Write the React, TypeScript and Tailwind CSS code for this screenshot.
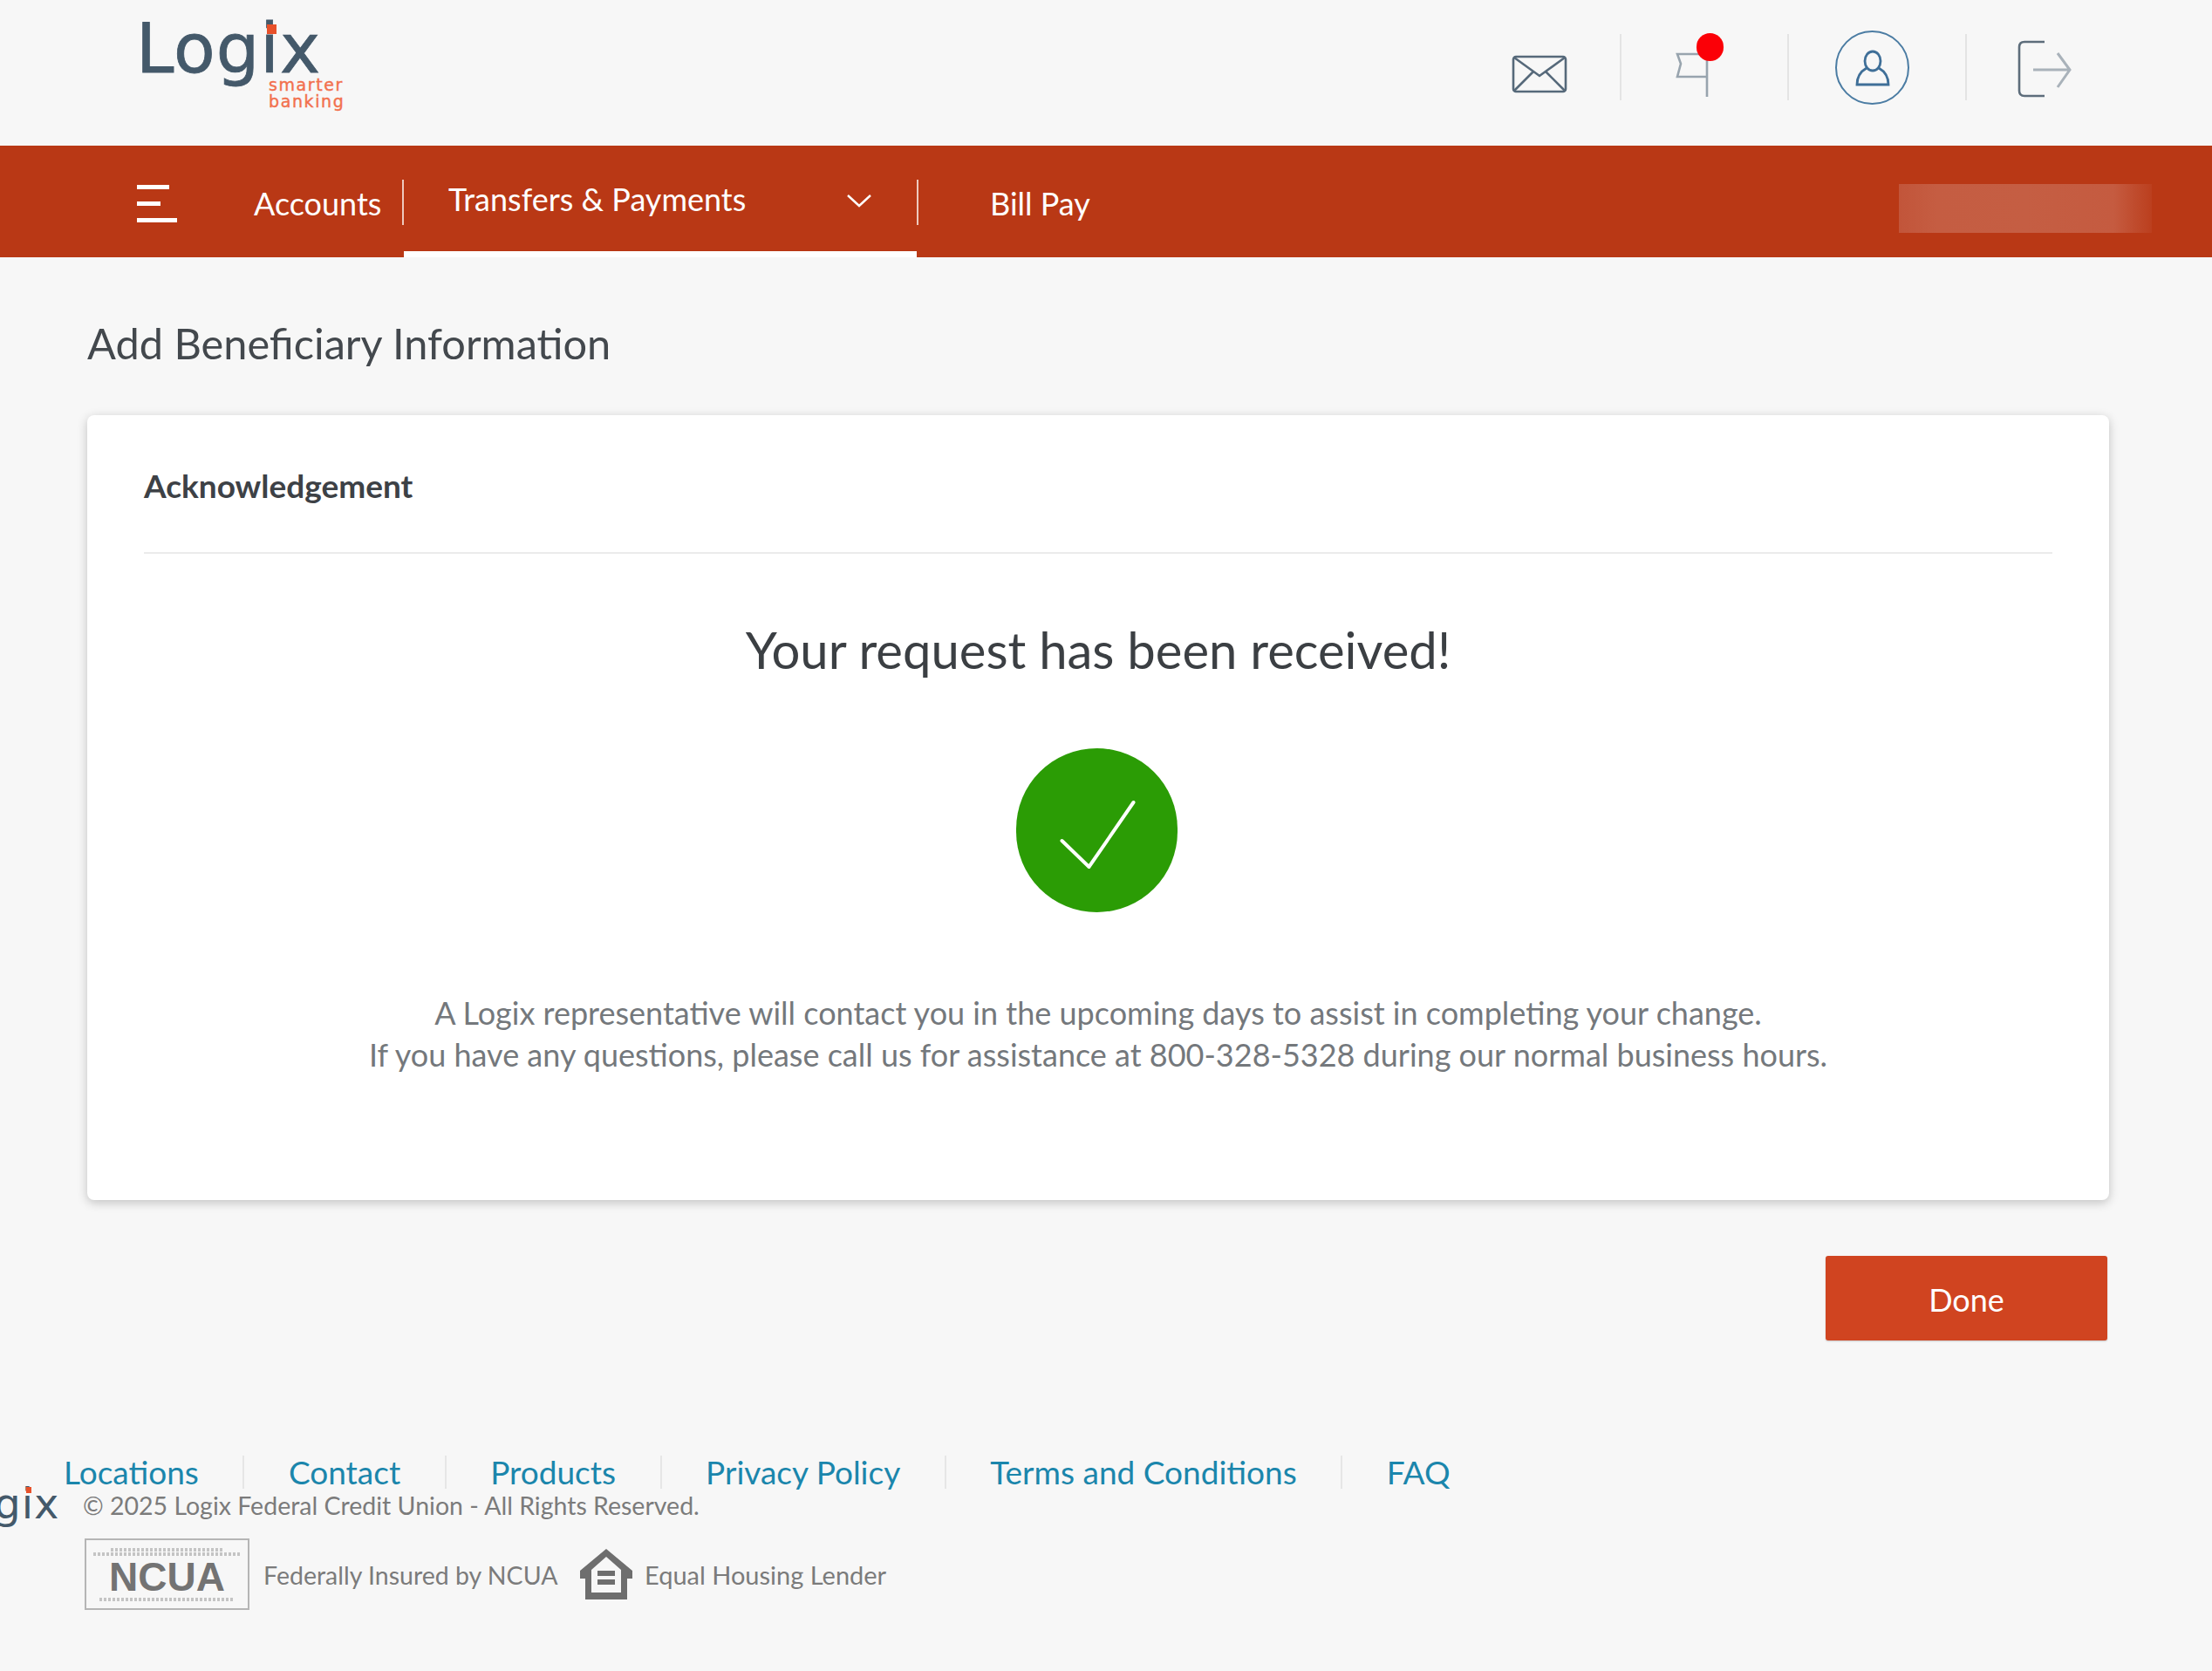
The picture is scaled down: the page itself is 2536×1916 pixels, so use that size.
import React from "react";

const Logo = () => (
  <div className="relative w-[240px] h-[110px] font-['DejaVu_Sans',sans-serif]">
    <span className="absolute left-[-4px] top-[27px] text-[78px] leading-[58px] font-normal text-[#44596a] tracking-[1px] [-webkit-text-stroke:0.8px_#44596a]">Logix</span>
    <span className="absolute left-[146px] top-[28px] w-[11px] h-[11px] bg-[#e8512a]" />
    <span className="absolute left-[148px] top-[88px] text-[19px] leading-[19px] font-normal text-[#f2704e] tracking-[1.6px] [-webkit-text-stroke:0.4px_#f2704e]">smarter<br />banking</span>
  </div>
);

const Sep = () => <div className="w-[2px] h-[76px] bg-[#e4e4e4]" />;
const FootSep = () => <div className="w-[2px] h-[38px] bg-[#e6e6e6] mx-[50.5px]" />;

export default function App() {
  return (
    <div className="w-[2536px] h-[1916px] overflow-hidden bg-[#f7f7f7] font-['Lato',sans-serif]">
      <header className="h-[167px] flex items-start">
        <div className="pl-[160px]"><Logo /></div>
        <div className="ml-auto relative w-[850px] h-[167px] flex items-center">
          <svg className="ml-[47px] mt-[2px]" width="64" height="44" viewBox="0 0 64 44" fill="none" stroke="#56697a" strokeWidth="2.6">
            <rect x="2" y="2" width="60" height="40" rx="3" />
            <path d="M3 3 L32 24 L61 3 M3 41 L25 19 M61 41 L39 19" />
          </svg>
          <div className="ml-[60px] -mt-[14px]"><Sep /></div>
          <svg className="ml-[62px] mt-[2px]" width="40" height="54" viewBox="0 0 40 54" fill="none" stroke="#98a4ae" strokeWidth="2.6">
            <path d="M36 2 V53 M36 4 H2 L6 15 L2 30 H36" />
          </svg>
          <div className="ml-[88px] -mt-[14px]"><Sep /></div>
          <div className="ml-[53px] -mt-[12px] w-[85px] h-[85px] rounded-full border-2 border-[#4b7ca3] flex items-center justify-center">
            <svg width="40" height="42" viewBox="0 0 40 42" fill="none" stroke="#3f6f98" strokeWidth="2.8">
              <ellipse cx="20" cy="13" rx="9" ry="11" />
              <path d="M13 21 C6 25 2 31 2 40 H38 C38 31 34 25 27 21" />
            </svg>
          </div>
          <div className="ml-[64px] -mt-[14px]"><Sep /></div>
          <svg className="ml-[58px] -mt-[10px]" width="62" height="66" viewBox="0 0 62 66" fill="none">
            <path d="M31 2 H8 Q2 2 2 8 V58 Q2 64 8 64 H31" stroke="#5d6d7b" strokeWidth="2.6" />
            <path d="M18 34 H60 M46 15 L60 34 L46 54" stroke="#a9b2ba" strokeWidth="3" />
          </svg>
          <span className="absolute left-[259px] top-[38px] w-[31px] h-[32px] rounded-full bg-[#fb0007]" />
        </div>
      </header>

      <nav className="h-[128px] bg-[#b93815] flex items-stretch text-white text-[36px]">
        <div className="ml-[157px] mt-[45px] flex flex-col gap-[14px]">
          <div className="w-[37px] h-[5px] bg-white" />
          <div className="w-[27px] h-[5px] bg-white" />
          <div className="w-[46px] h-[5px] bg-white" />
        </div>
        <span className="ml-[88px] mt-[44px] leading-[44px] w-[170px]">Accounts</span>
        <div className="w-[2px] h-[52px] mt-[39px] bg-[#eec9bd]" />
        <div className="w-[588px] border-b-[7px] border-white flex items-start pl-[51px]">
          <span className="mt-[39px] leading-[44px]">Transfers &amp; Payments</span>
          <svg className="ml-auto mr-[51px] mt-[55px]" width="30" height="16" viewBox="0 0 30 16" fill="none" stroke="#fff" strokeWidth="2.4"><path d="M2 2 L15 14 L28 2" /></svg>
        </div>
        <div className="w-[2px] h-[52px] mt-[39px] bg-[#eec9bd]" />
        <span className="ml-[82px] mt-[44px] leading-[44px]">Bill Pay</span>
        <div className="ml-auto mr-[69px] mt-[44px] w-[290px] h-[56px] bg-[linear-gradient(90deg,#c2553a,#c55d42_15%,#c55e43_50%,#c55b40_85%,#bb3f1e)]" />
      </nav>

      <main className="pl-[100px] pr-[118px]">
        <h1 className="mt-[71px] text-[48.7px] leading-[54px] text-[#43484d] font-normal">Add Beneficiary Information</h1>
        <section className="mt-[56px] h-[900px] bg-white rounded-[8px] shadow-[0_3px_12px_rgba(0,0,0,0.22)] px-[65px]">
          <h2 className="pt-[58px] text-[37px] leading-[46px] font-bold text-[#3d4146] h-[159px] border-b-2 border-[#ebebeb]">Acknowledgement</h2>
          <div className="flex flex-col items-center">
            <p className="mt-[76px] text-[58px] leading-[68px] text-[#3b3f43]">Your request has been received!</p>
            <div className="mt-[79px] -ml-[3px] w-[185px] h-[188px] rounded-full bg-[#2b9c05] flex items-center justify-center">
              <svg width="92" height="88" viewBox="0 0 92 88" fill="none" stroke="#fff" strokeWidth="4" strokeLinecap="round"><path d="M5.5 56 L36.5 86 L87.5 12" /></svg>
            </div>
            <p className="mt-[91px] text-[36px] leading-[48px] text-[#74787c] text-center">A Logix representative will contact you in the upcoming days to assist in completing your change.<br />If you have any questions, please call us for assistance at 800-328-5328 during our normal business hours.</p>
          </div>
        </section>
        <div className="flex justify-end mt-[64px] pr-[2px]">
          <button className="w-[323px] h-[97px] pt-[2px] bg-[#d04420] rounded-[3px] text-white text-[36px] shadow-[0_1px_2px_rgba(0,0,0,0.2)]">Done</button>
        </div>
      </main>

      <footer className="mt-[132px] pl-[73px]">
        <div className="flex items-center text-[37px] leading-[38px] text-[#1b86ac]">
          <a>Locations</a><FootSep /><a>Contact</a><FootSep /><a>Products</a><FootSep /><a>Privacy Policy</a><FootSep /><a>Terms and Conditions</a><FootSep /><a>FAQ</a>
        </div>
        <div className="relative -ml-[73px] pl-[95px] -mt-[1px] text-[28.5px] leading-[40px] text-[#7b7b7b]">
          <span className="absolute left-[-64px] top-[-10px] text-[48px] leading-[56px] font-normal text-[#44596a] tracking-[1px] font-['DejaVu_Sans',sans-serif]">Logix</span>
          <span className="absolute left-[30px] top-[-1px] w-[6px] h-[7px] bg-[#e8512a]" />
          © 2025 Logix Federal Credit Union - All Rights Reserved.
        </div>
        <div className="-ml-[73px] pl-[97px] mt-[18px] flex items-center text-[28.5px] text-[#7b7b7b]">
          <div className="w-[189px] h-[82px] border-2 border-[#b5b5b5] flex flex-col items-center justify-center gap-[1px]">
            <div className="w-[130px] h-[4px] bg-[repeating-linear-gradient(90deg,#c4c4c4_0_3px,transparent_3px_5px)]" />
            <div className="w-[170px] h-[4px] bg-[repeating-linear-gradient(90deg,#c4c4c4_0_3px,transparent_3px_5px)]" />
            <span className="text-[46px] leading-[46px] font-bold text-[#737373] font-['Liberation_Sans',sans-serif]">NCUA</span>
            <div className="w-[155px] h-[4px] bg-[repeating-linear-gradient(90deg,#c4c4c4_0_3px,transparent_3px_5px)]" />
          </div>
          <span className="ml-[16px] w-[363px] mt-[2px]">Federally Insured by NCUA</span>
          <svg width="60" height="58" viewBox="0 0 60 58" fill="#6e6e6e">
            <path fillRule="evenodd" d="M30 0 L60 25 V34 H54 V58 H6 V34 H0 V25 Z M30 9 L13 24 V50 H47 V24 Z" />
            <rect x="20" y="25" width="20" height="6" /><rect x="20" y="35" width="20" height="6" />
          </svg>
          <span className="ml-[14px] text-[29px] mt-[2px]">Equal Housing Lender</span>
        </div>
      </footer>
    </div>
  );
}
